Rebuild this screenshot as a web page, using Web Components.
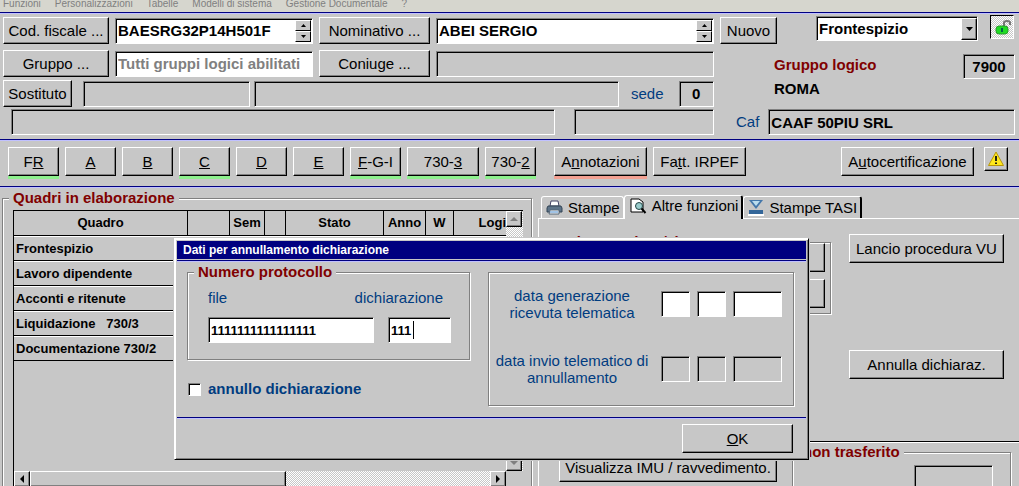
<!DOCTYPE html>
<html lang="it">
<head>
<meta charset="utf-8">
<title>Dichiarazione 730</title>
<style>
  html, body { height: 100%; margin: 0; }
  body {
    --face: #c7c7c7; --navy: #000080; --blue: #003c80; --red: #800000;
    background: var(--face); color: #000; overflow: hidden;
    font: 15px/18px "Liberation Sans", Arial, sans-serif;
  }
</style>
</head>
<body>
<tax-app></tax-app>
<script>
const define = (name, css, html) => customElements.define(name, class extends HTMLElement {
  constructor() { super(); this.attachShadow({ mode: 'open' }); }
  connectedCallback() {
    this.shadowRoot.innerHTML =
      `<style>*{box-sizing:border-box}:host{display:block;box-sizing:border-box}${css}</style>` +
      (typeof html === 'function' ? html(this) : html);
  }
});
const attr = (el, n, d = '') => el.getAttribute(n) ?? d;

/* Raised push button, with an optional coloured status strip below it */
define('win-button', `
  :host { flex: none; }
  button { display: flex; align-items: center; justify-content: center; width: 100%; height: var(--h, 27px);
    margin: 0; padding: 0; font: inherit; color: inherit; white-space: nowrap; background: var(--face);
    border: 1px solid; border-color: #fff #000 #000 #fff; box-shadow: inset -1px -1px #808080; }
  span { white-space: pre; }
  i { display: block; height: 3px; background: var(--strip, none); }
`, el => `<button type="button" aria-label="${attr(el, 'label', el.textContent.trim())}"><span><slot></slot></span></button>` +
  (el.hasAttribute('strip') ? '<i></i>' : ''));

/* Sunken text box with optional label, spin arrows and a steady text cursor */
define('win-field', `
  :host { display: flex; align-items: center; min-width: 0; position: relative; }
  :host([above]) { flex-direction: column; align-items: var(--side, flex-start); gap: 10px; }
  label { color: var(--blue); white-space: nowrap; margin-right: var(--lgap, 0); }
  input { flex: 1 1 auto; width: 100%; min-width: 0; height: var(--h, 26px); margin: 0; padding: 0 2px; outline: 0; border-radius: 0;
    font: bold var(--fs, 15px)/18px "Liberation Sans", Arial, sans-serif; color: var(--ink, #000);
    text-align: var(--align, left); background: var(--paper, #fff);
    border: 1px solid; border-color: #808080 #fff #fff #808080; box-shadow: inset 1px 1px #000; }
  :host([above]) input { flex: none; }
  :host([dim]) input { background: var(--face); }
  :host([cursor]) input { caret-color: transparent; }
  :host([cursor])::after { content: ""; position: absolute; left: 25px; bottom: 4px; width: 1px; height: 18px; background: #000; }
  .spin { position: absolute; right: 2px; top: 2px; bottom: 2px; width: 16px; display: flex; flex-direction: column; }
  .spin button { flex: 1; min-height: 0; padding: 0; display: flex; align-items: center; justify-content: center; background: var(--face);
    border: 1px solid; border-color: #fff #000 #000 #fff; }
`, el => `${el.hasAttribute('label') ? `<label for="f">${attr(el, 'label')}</label>` : ''}
  <input id="f" type="text" value="${attr(el, 'value')}" ${el.hasAttribute('dim') ? 'readonly' : ''} ${el.hasAttribute('name') ? `aria-label="${attr(el, 'name')}"` : ''}>
  ${el.hasAttribute('spin') ? `<div class="spin"><button type="button" aria-label="precedente"><svg width="5" height="3"><path d="M0 3L2.500 0L5 3z"/></svg></button><button type="button" aria-label="successivo"><svg width="5" height="3"><path d="M0 0L2.500 3L5 0z"/></svg></button></div>` : ''}`);

/* Etched group frame */
define('group-box', `
  fieldset { height: 100%; margin: 0; min-width: 0; padding: var(--pad, 0); border: 1px solid #808080;
    box-shadow: 1px 1px #fff, inset 1px 1px #fff; }
  :host([open]) fieldset { border-bottom: 0; }
  legend { margin-left: var(--lx, 6px); padding: 0 4px; font-weight: bold; color: var(--red); background: var(--face); white-space: nowrap; }
`, el => `<fieldset>${el.hasAttribute('legend') ? `<legend>${attr(el, 'legend')}</legend>` : ''}<slot></slot></fieldset>`);

define('menu-bar', `
  nav { display: flex; align-items: flex-end; gap: 14px; height: 12px; padding: 0 3px 2px; overflow: hidden; background: #d6d6ce; }
  a { color: #808080; text-decoration: none; font-size: 10px; line-height: 12px; white-space: nowrap; }
`, `<nav><a href="#">Funzioni</a><a href="#">Personalizzazioni</a><a href="#">Tabelle</a><a href="#">Modelli di sistema</a><a href="#">Gestione Documentale</a><a href="#">?</a></nav>`);

define('rule-line', `:host { height: 2px; background: #c0c0ff; border-top: 1px solid var(--navy); }`, '');

define('win-select', `
  :host { position: relative; }
  select { appearance: none; width: 100%; height: 25px; padding: 0 18px 0 2px; border-radius: 0; background: #fff; color: #000;
    font: bold 15px/18px "Liberation Sans", Arial, sans-serif;
    border: 1px solid; border-color: #808080 #fff #fff #808080; box-shadow: inset 1px 1px #000; }
  span { position: absolute; right: 1px; top: 2px; bottom: 1px; width: 16px; pointer-events: none; display: flex; align-items: center; justify-content: center;
    background: var(--face); border: 1px solid; border-color: #fff #000 #000 #fff; box-shadow: inset -1px -1px #808080; }
`, `<select aria-label="Quadro"><option>Frontespizio</option></select><span><svg width="7" height="4"><path d="M0 0h7L3.500 4z"/></svg></span>`);

define('record-header', `
  :host { display: flex; gap: 6px; padding: 3px 4px 4px 3px; }
  .row { display: flex; align-items: center; gap: 6px; }
  .left { flex: 1; min-width: 0; }
  .left .row + .row { margin-top: 6px; }
  .left .r3 { height: 27px; margin-top: 3px !important; gap: 0; }
  .left .r4 { margin: 2px 0 0 8px !important; gap: 19px; }
  .cmd { width: 106px; } .cmd2 { width: 111px; }
  .f1 { flex: 198 1 0; } .f2 { flex: 278 1 0; }
  .right { width: 295px; flex: none; }
  .top { height: 25px; gap: 0; align-items: flex-start; }
  .lock { width: 24px; height: 24px; margin: -2px 1px 0 auto; padding: 0; border: 1px solid; border-color: #000 #fff #fff #000;
    background: repeating-conic-gradient(#fff 0 25%, #c7c7c7 0 50%) 0 0 / 2px 2px; }
  .lock svg { display: block; }
  .grp { margin: 12px 0 0 54px; height: 25px; justify-content: space-between; }
  strong { font-weight: bold; } .red { color: var(--red); margin-top: -4px; }
  .city { display: block; margin: 1px 0 0 54px; line-height: 18px; }
`, `
  <div class="left">
    <div class="row">
      <win-button class="cmd">Cod. fiscale ...</win-button>
      <win-field class="f1" name="Codice fiscale" value="BAESRG32P14H501F" spin></win-field>
      <win-button class="cmd2">Nominativo ...</win-button>
      <win-field class="f2" name="Nominativo" value="ABEI SERGIO" spin></win-field>
    </div>
    <div class="row">
      <win-button class="cmd">Gruppo ...</win-button>
      <win-field class="f1" name="Gruppo" value="Tutti gruppi logici abilitati" style="--ink:#808080"></win-field>
      <win-button class="cmd2">Coniuge ...</win-button>
      <win-field class="f2" name="Coniuge" dim></win-field>
    </div>
    <div class="row r3">
      <win-button style="width:69px">Sostituto</win-button>
      <win-field name="Codice sostituto" dim style="flex:167 1 0;margin:0 4px 0 11px"></win-field>
      <win-field name="Sostituto" dim style="flex:365 1 0"></win-field>
      <win-field label="sede" value="0" dim style="width:83px;margin-left:12px;--lgap:15px;--align:center"></win-field>
    </div>
    <div class="row r4">
      <win-field name="Indirizzo" dim style="flex:544 1 0"></win-field>
      <win-field name="Telefono" dim style="flex:140 1 0"></win-field>
    </div>
  </div>
  <div class="right">
    <div class="row top">
      <win-button style="width:57px">Nuovo</win-button>
      <win-select style="width:162px;margin:-1px 0 0 39px"></win-select>
      <button class="lock" type="button" aria-label="Sblocca"><svg width="22" height="22" viewBox="0 0 22 22">
        <path d="M13 11V6.500Q13 5 16 5Q19 5 19 6.500V9" fill="none" stroke="#777" stroke-width="2"/>
        <rect x="5" y="10" width="12" height="8" rx="3" fill="#1fdc24" stroke="#2a9a2c"/>
        <path d="M10 12h2v4h-2z" fill="#064"/></svg></button>
    </div>
    <div class="row grp"><strong class="red">Gruppo logico</strong>
      <win-field name="Gruppo logico" value="7900" dim style="width:52px;--h:25px;--align:center"></win-field></div>
    <strong class="city">ROMA</strong>
    <win-field label="Caf" value="CAAF 50PIU SRL" dim style="margin:11px 0 0 16px;--lgap:9px"></win-field>
  </div>`);

define('section-nav', `
  :host { padding: 6px 11px 7px 8px; }
  nav { display: flex; align-items: flex-start; gap: 6px; --h: 29px; }
  win-button { width: 51px; }
  .g { --strip: #8df08d; } .r { --strip: #f3a193; }
  .w { width: 93px; }
`, `<nav>
  <win-button class="g" strip>F<u>R</u></win-button><win-button strip><u>A</u></win-button><win-button strip><u>B</u></win-button>
  <win-button class="g" strip><u>C</u></win-button><win-button strip><u>D</u></win-button><win-button strip><u>E</u></win-button>
  <win-button class="g" strip><u>F</u>-G-I</win-button><win-button class="g" strip style="width:72px">730-<u>3</u></win-button>
  <win-button class="g" strip>730-<u>2</u></win-button>
  <win-button class="r w" strip style="margin-left:12px">A<u>n</u>notazioni</win-button>
  <win-button class="w" strip>Fa<u>t</u>t. IRPEF</win-button>
  <win-button strip style="width:133px;margin-left:auto">A<u>u</u>tocertificazione</win-button>
  <win-button label="Avvisi" style="width:24px;margin-left:4px;--h:24px"><svg width="18" height="18" viewBox="0 0 18 18" style="display:block"><path d="M9 2L16.500 15.500H1.500z" fill="#ffe81c" stroke="#b8960a" stroke-linejoin="round"/><path d="M9 6v5M9 12.500v1.500" stroke="#221" stroke-width="2"/></svg></win-button>
</nav>`);

define('frame-table', `
  :host { height: 100%; }
  .area { display: grid; grid-template-columns: minmax(0, 1fr) 17px; grid-template-rows: minmax(0, 1fr) 15px; height: 100%; border-left: 1px solid #000; }
  .view { overflow: hidden; border-top: 1px solid #000; }
  table { width: 100%; table-layout: fixed; border-collapse: separate; border-spacing: 0; font: bold 13px/18px "Liberation Sans", Arial, sans-serif; }
  th, td { height: 25px; padding: 0 0 0 2px; border-bottom: 1px solid #000; text-align: left; white-space: nowrap; overflow: hidden; }
  td { border-top: 1px solid #fff; }
  th { padding: 0; text-align: center; border-right: 1px solid #000; }
  th:last-child { border-right: 0; text-align: right; }
  td:first-child { white-space: pre; }
  .v, .h { display: flex; justify-content: space-between; background: repeating-conic-gradient(#fff 0 25%, #c7c7c7 0 50%) 0 0 / 2px 2px; }
  .v { flex-direction: column; border-top: 1px solid #000; }
  button, .thumb { flex: none; width: 16px; height: 16px; padding: 0; display: flex; align-items: center; justify-content: center; background: var(--face);
    border: 1px solid; border-color: #fff #000 #000 #fff; box-shadow: inset -1px -1px #808080; }
  .thumb { width: 52%; margin-right: auto; }
`, () => {
  const w = [0, 42, 35, 21, 98, 42, 28, 52], heads = ['Quadro', '', 'Sem', '', 'Stato', 'Anno', 'W', 'Logi'];
  const rows = ['Frontespizio', 'Lavoro dipendente', 'Acconti e ritenute', 'Liquidazione   730/3', 'Documentazione 730/2'];
  const btn = (n, d, c = '#000') => `<button type="button" aria-label="${n}"><svg width="8" height="8"><path d="${d}" fill="${c}"/></svg></button>`;
  return `<div class="area"><div class="view"><table>
    <colgroup>${w.map(x => x ? `<col style="width:${x}px">` : '<col>').join('')}</colgroup>
    <thead><tr>${heads.map(h => `<th scope="col">${h}</th>`).join('')}</tr></thead>
    <tbody>${rows.map(r => `<tr><td>${r}</td>${'<td></td>'.repeat(7)}</tr>`).join('')}</tbody></table></div>
    <div class="v">${btn('su', 'M0 6L4 2L8 6z', '#808080')}${btn('giù', 'M0 2L4 6L8 2z', '#808080')}</div>
    <div class="h">${btn('sinistra', 'M6 0L2 4L6 8z')}<div class="thumb"></div>${btn('destra', 'M2 0L6 4L2 8z')}</div></div>`;
});

define('function-tabs', `
  :host { display: flex; flex-direction: column; padding-top: 6px; }
  .tabs { display: flex; align-items: flex-end; padding-left: 3px; height: 24px; }
  .tabs button { display: flex; align-items: center; gap: 5px; height: 22px; padding: 0 3px 0 4px; margin: 0; font: inherit; color: inherit; white-space: nowrap;
    background: var(--face); border: 1px solid #fff; border-bottom: 0; border-radius: 3px 3px 0 0; }
  .tabs .on { height: 24px; padding: 0 3px 4px 5px; border-right: 2px solid #000; margin-bottom: -1px; position: relative; }
  .tabs .end { border-right: 2px solid #000; }
  .tabs svg { flex: none; }
  .pane { flex: 1; min-height: 0; border: solid #fff; border-width: 1px 0 0 1px; }
  .upper { display: flex; justify-content: space-between; min-height: 222px; padding: 14px 15px 0 14px; }
  .upper > group-box { flex: 0 1 278px; height: 81px; --pad: 0 5px 0 20px; --lx: -12px; }
  .upper win-button, .lower win-button { --h: 29px; }
  .stack { display: flex; flex-direction: column; gap: 7px; margin-top: -8px; }
  .cmds { width: 155px; display: flex; flex-direction: column; gap: 87px; margin-top: 1px; }
  .sep { height: 2px; background: #fff; border-top: 1px solid #000; }
  .lower { display: flex; margin-right: 8px; }
  .lower > win-button { width: 218px; margin: 10px 15px 0 20px; }
  .lower > group-box { flex: 1; height: 80px; --lx: -11px; --pad: 4px 17px; }
`, `
  <div class="tabs" role="tablist">
    <button role="tab" type="button"><svg width="17" height="16" viewBox="0 0 17 16"><path d="M5 1h7l1 5H4z" fill="#fff" stroke="#446"/><path d="M2 6h13l1 2v4H1V8z" fill="#5d7388" stroke="#345"/><path d="M4 10h9v4H3z" fill="#fff" stroke="#567"/><path d="M4 12h8" stroke="#48c" /></svg>Stampe</button>
    <button role="tab" type="button" class="on" aria-selected="true"><svg width="17" height="16" viewBox="0 0 17 16"><path d="M1 1h8l4 3v10H1z" fill="#fff" stroke="#000"/><circle cx="9" cy="8" r="3.500" fill="#9cc" stroke="#244"/><path d="M11.500 10.500L15.500 15" stroke="#000" stroke-width="2"/></svg>Altre funzioni</button>
    <button role="tab" type="button" class="end"><svg width="16" height="16" viewBox="0 0 16 16"><path d="M1 0h14L8 9z" fill="#47a"/><path d="M4 1h8L8 6z" fill="#bde"/><path d="M1 10h14v4H1z" fill="#369"/><path d="M0 15h16" stroke="#fff" stroke-width="2"/></svg>Stampe TASI</button>
  </div>
  <div class="pane" role="tabpanel">
    <div class="upper">
      <group-box legend="Ricevuta (730/1)"><div class="stack"><win-button label="Stampa ricevuta"></win-button><win-button label="Visualizza ricevuta"></win-button></div></group-box>
      <div class="cmds"><win-button>Lancio procedura VU</win-button><win-button>Annulla dichiaraz.</win-button></div>
    </div>
    <div class="sep"></div>
    <div class="lower">
      <win-button>Visualizza IMU / ravvedimento.</win-button>
      <group-box legend="non trasferito"><win-field name="Importo non trasferito" dim style="width:79px;margin-left:auto"></win-field></group-box>
    </div>
  </div>`);

/* Modal window for cancelling a filed return */
define('cancel-dialog', `
  section { background: var(--face); border: 1px solid; border-color: #fff #000 #000 #fff; outline: 1px solid; outline-color: #c7c7c7;
    box-shadow: inset 1px 1px #fff, inset -1px -1px #808080; padding: 2px 2px 6px; }
  h2 { margin: 0 0 1px; height: 18px; padding-left: 6px; background: var(--navy); color: #fff; font: bold 12px/18px "Liberation Sans", Arial, sans-serif; }
  .body { display: grid; grid-template-columns: 283px 306px; justify-content: space-between; padding: 1px 12px 11px 10px; }
  .proto { height: 97px; --lx: -14px; --pad: 8px 18px 0 20px; }
  .nums { display: flex; justify-content: space-between; --fs: 13px; }
  .file { width: 166px; }
  .decl { width: 63px; --side: flex-end; --lgap: 8px; }
  .check { display: flex; align-items: center; gap: 7px; margin: 20px 0 0 1px; font-weight: bold; color: var(--blue); }
  .check input { appearance: none; width: 13px; height: 13px; margin: 0; background: #fff; border: 1px solid; border-color: #808080 #fff #fff #808080; box-shadow: inset 1px 1px #000; }
  .dates { margin-top: 9px; height: 134px; --pad: 14px 11px 0 6px; }
  .date { display: flex; align-items: center; gap: 7px; height: 34px; margin-bottom: 31px; }
  .date win-field { flex: none; }
  .date p { margin: 0 5px 0 0; flex: 1; text-align: center; color: var(--blue); line-height: 17px; white-space: nowrap; }
  .s { width: 29px; } .l { width: 49px; }
  .foot { display: flex; justify-content: flex-end; padding: 5px 13px 0; --h: 29px; }
`, `<section role="dialog" aria-labelledby="t">
  <h2 id="t">Dati per annullamento dichiarazione</h2><rule-line></rule-line>
  <div class="body">
    <div>
      <group-box class="proto" legend="Numero protocollo"><div class="nums">
        <win-field above class="file" label="file" value="1111111111111111"></win-field>
        <win-field above cursor class="decl" label="dichiarazione" value="111"></win-field>
      </div></group-box>
      <label class="check"><input type="checkbox">annullo dichiarazione</label>
    </div>
    <group-box class="dates">
      <div class="date"><p>data generazione<br>ricevuta telematica</p><win-field class="s" name="giorno ricevuta"></win-field><win-field class="s" name="mese ricevuta"></win-field><win-field class="l" name="anno ricevuta"></win-field></div>
      <div class="date"><p>data invio telematico di<br>annullamento</p><win-field class="s" name="giorno annullamento" dim></win-field><win-field class="s" name="mese annullamento" dim></win-field><win-field class="l" name="anno annullamento" dim></win-field></div>
    </group-box>
  </div>
  <rule-line></rule-line>
  <div class="foot"><win-button style="width:111px"><u>O</u>K</win-button></div>
</section>`);

define('tax-app', `
  :host { display: flex; flex-direction: column; height: 100vh; overflow: hidden; position: relative; }
  main { flex: 1; min-height: 0; display: flex; gap: 6px; padding-left: 2px; }
  .list { flex: 530 1 0; min-width: 0; padding-top: 1px; --pad: 3px 8px 0 10px; --lx: -4px; }
  function-tabs { flex: 481 1 0; min-width: 0; }
  cancel-dialog { position: absolute; left: 174px; top: 238px; width: 635px; }
`, `
  <menu-bar></menu-bar><rule-line></rule-line>
  <record-header></record-header><rule-line></rule-line>
  <section-nav></section-nav><rule-line></rule-line>
  <main><group-box class="list" open legend="Quadri in elaborazione"><frame-table></frame-table></group-box><function-tabs></function-tabs></main>
  <cancel-dialog></cancel-dialog>`);
</script>
</body>
</html>
